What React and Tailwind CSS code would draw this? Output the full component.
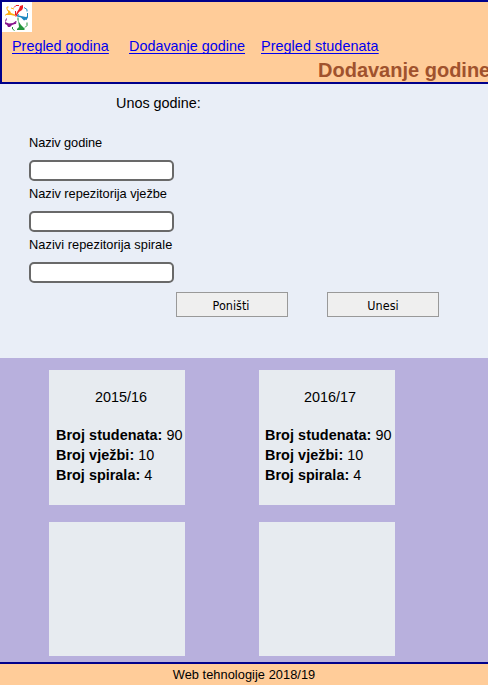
const years = [
  { name: "2015/16", students: 90, labs: 10, spirals: 4, shift: "pl-[7px]", titleShift: "pl-[8px]" },
  { name: "2016/17", students: 90, labs: 10, spirals: 4, shift: "pl-[6px]", titleShift: "pl-[6px]" },
  null,
  null,
];

function Logo() {
  return (
    <svg viewBox="0 0 30 30" className="block h-[30px] w-[30px] bg-white" fill="none" strokeWidth="1">
      <g stroke="#ffb014">
        <path d="M6.500 5h-1.500v2l1 2M9 6l3 1M3.500 13.500v-1" />
        <path d="M6 8l2 1 1 2 4 1.500v1.500l-4-1H4v-1l2-1z" fill="#ffb014" stroke="none" />
      </g>
      <g stroke="#ed1c24">
        <path d="M12 5.500l2-2h3M13.500 9v4" />
        <path d="M18 4l3-1v3l-1 2-3 2-3 5-.8-1 1.800-4 2-3z" fill="#ed1c24" stroke="none" />
      </g>
      <g stroke="#1b87c0">
        <path d="M22 5.500l3 2v2M25.500 11v4l-1.500 3M15 13.500l2-1" />
        <path d="M15 13l4 1 5 1 2-1-1 3-3 1.500-3-3-4-1z" fill="#1b87c0" stroke="none" />
      </g>
      <g stroke="#23963c">
        <path d="M25 20.500v3l-2 2M10.500 25v2l2 1.500M16 15.500v3" />
        <path d="M16 17l1 3 2 3 2 2 2 2-1 1h-7v-1l2-2z" fill="#23963c" stroke="none" />
      </g>
      <g stroke="#86148c">
        <path d="M4.500 16.500l-1 3M14 19l-.5 3" />
        <path d="M3 20l4 1.500 4-.5 3-2-1 3-3 1-2 2H6l-1-2-2-1z" fill="#86148c" stroke="none" />
      </g>
    </svg>
  );
}

function Field({ label, id, tracking }) {
  return (
    <div className="h-[51px]">
      <label htmlFor={id} className={"block h-[25px] whitespace-nowrap text-[12.8px] leading-[16px] " + tracking}>{label}</label>
      <input id={id} className="block h-[21px] w-[145px] rounded-[5px] border-2 border-[#696969] bg-white outline-none" />
    </div>
  );
}

function Card({ year }) {
  if (!year) return <div className="h-[134px] w-[136px] bg-[#e7ebf0]" />;
  return (
    <div className="h-[135px] w-[136px] overflow-hidden bg-[#e7ebf0] pt-[17px] text-[14.4px] leading-[20px]">
      <div className={"h-[38px] text-center " + year.titleShift}>{year.name}</div>
      <div className={"whitespace-nowrap " + year.shift}>
        <div><b className="tracking-[0.06px]">Broj studenata:</b> {year.students}</div>
        <div><b className="tracking-[0.06px]">Broj vježbi:</b> {year.labs}</div>
        <div><b className="tracking-[0.02px]">Broj spirala:</b> {year.spirals}</div>
      </div>
    </div>
  );
}

export default function App() {
  return (
    <div className="flex h-[685px] w-[488px] flex-col overflow-hidden bg-[#e9eef7] font-['Liberation_Sans',Arial,sans-serif] text-black">
      <header className="h-[84px] shrink-0 border-y-2 border-l-2 border-[#00008b] bg-[#ffcc99]">
        <Logo />
        <nav className="flex h-[26px] pl-[10px] pt-[4px] text-[14.4px] leading-[20px] whitespace-nowrap text-[#0000ee] underline decoration-1 underline-offset-2 [text-decoration-skip-ink:none]">
          <div className="w-[117px]"><a href="#">Pregled godina</a></div>
          <div className="w-[132px]"><a href="#">Dodavanje godine</a></div>
          <div><a href="#" className="tracking-[0.05px]">Pregled studenata</a></div>
        </nav>
        <h1 className="h-[24px] whitespace-nowrap pl-[316px] text-[20px] leading-[24px] font-bold text-[#a0522d]">Dodavanje godine</h1>
      </header>
      <main className="h-[274px] shrink-0">
        <h2 className="h-[51px] pl-[116px] pt-[9px] text-[14.4px] leading-[20px]">Unos godine:</h2>
        <div className="pl-[29px]">
          <Field id="godina" label="Naziv godine" tracking="tracking-[-0.08px]" />
          <Field id="vjezbe" label="Naziv repezitorija vježbe" tracking="tracking-[-0.03px]" />
          <Field id="spirale" label="Nazivi repezitorija spirale" tracking="tracking-[0.04px]" />
        </div>
        <div className="flex gap-[39px] pl-[176px] pt-[4px] font-['DejaVu_Sans_Condensed','DejaVu_Sans',sans-serif] text-[12.5px]">
          <button className="h-[25px] w-[112px] border border-[#999] bg-[#efefef] pt-[3px] pr-[2px]">Poništi</button>
          <button className="h-[25px] w-[112px] border border-[#999] bg-[#efefef] pt-[3px]">Unesi</button>
        </div>
      </main>
      <section className="grid h-[304px] shrink-0 grid-cols-[136px_136px] content-start gap-x-[74px] gap-y-[17px] bg-[#b8b0dd] pl-[49px] pt-[12px]">
        {years.map((y, i) => <Card key={i} year={y} />)}
      </section>
      <footer className="h-[23px] shrink-0 border-t-2 border-[#00008b] bg-[#ffcc99] text-center text-[12.8px] leading-[21px] tracking-[0.05px]">Web tehnologije 2018/19</footer>
    </div>
  );
}
